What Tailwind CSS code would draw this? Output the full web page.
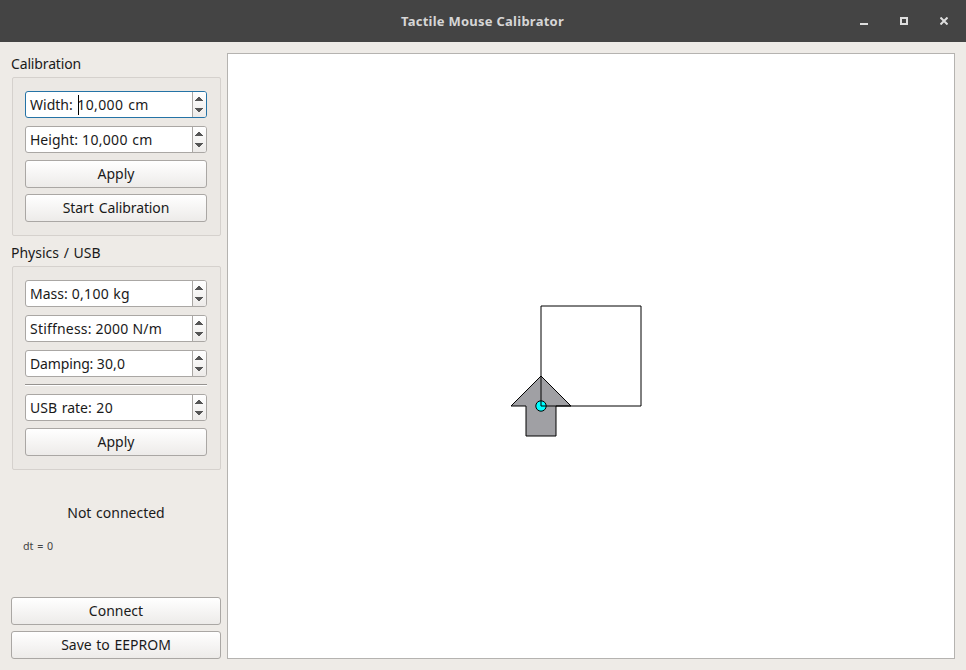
<!DOCTYPE html>
<html lang="en">
<head>
<meta charset="utf-8">
<title>Tactile Mouse Calibrator</title>
<script src="https://cdn.jsdelivr.net/npm/@tailwindcss/browser@4"></script>
</head>
<body class="w-[966px] h-[670px] overflow-hidden flex flex-col bg-[#eeebe7] font-['Noto_Sans',sans-serif] text-[14px] leading-5 text-[#1a1a1a]">
<svg class="hidden">
  <symbol id="arrows" viewBox="0 0 14 25"><path fill="#555" d="M6 5h2v1h1v1h1v1h1v1H3V8h1V7h1V6h1zM3 16h8v1h-1v1H9v1H8v1H6v-1H5v-1H4v-1H3z"/></symbol>
</svg>
<header class="relative h-[42px] shrink-0 bg-[#444] flex items-center justify-center">
  <h1 class="font-bold text-[13px] tracking-[.25px] -ml-px text-[#d6d6d6] whitespace-nowrap">Tactile Mouse Calibrator</h1>
  <div class="absolute right-[18px] top-[17px] flex gap-8">
    <svg class="w-2 h-2" viewBox="0 0 8 8"><path fill="#dedede" d="M0 6h8v2H0z"/></svg>
    <svg class="w-2 h-2" viewBox="0 0 8 8"><path fill="none" stroke="#dedede" stroke-width="2" d="M1 1h6v6H1z"/></svg>
    <svg class="w-2 h-2" viewBox="0 0 8 8"><path stroke="#dedede" stroke-width="2" d="M.5.5l7 7M7.5.5l-7 7"/></svg>
  </div>
</header>
<main class="flex flex-1 pl-[11px] pt-[11px] pr-[11px] pb-[11px] gap-[6px]">
  <aside class="w-[210px] flex flex-col whitespace-nowrap">
    <h2 class="h-6 leading-[21px] tracking-[-.15px]">Calibration</h2>
    <section class="ml-px h-[159px] border border-[#d5d1cd] rounded-[2px] bg-[#ebe8e4] pl-3 pr-[13px] pt-[13px] flex flex-col">
      <div class="h-[27px] mb-2 border border-[#2573a6] rounded-[3px] bg-white flex overflow-hidden">
        <div class="flex-1 pl-1 leading-[25px] relative [word-spacing:1px]">Width: <span class="tracking-[.35px]">10,000 cm</span><i class="absolute left-[52px] top-[3px] w-px h-5 bg-black"></i></div>
        <div class="w-[14px] border-l border-[#aaa7a4] bg-linear-to-b from-white to-[#edebe9]"><svg class="w-[14px] max-w-none h-[25px] -ml-px"><use href="#arrows"/></svg></div>
      </div>
      <div class="h-[27px] mb-[7px] border border-[#aaa7a4] rounded-[3px] bg-white flex overflow-hidden">
        <div class="flex-1 pl-1 leading-[25px] [word-spacing:.5px]">Height: <span class="tracking-[.3px]">10,000 cm</span></div>
        <div class="w-[14px] border-l border-[#aaa7a4] bg-linear-to-b from-white to-[#edebe9]"><svg class="w-[14px] max-w-none h-[25px] -ml-px"><use href="#arrows"/></svg></div>
      </div>
      <button class="h-7 mb-[6px] border border-[#aaa7a4] rounded-[3px] bg-linear-to-b from-white to-[#edebe9]">Apply</button>
      <button class="h-7 border border-[#aaa7a4] rounded-[3px] bg-linear-to-b from-white to-[#edebe9] tracking-[-.1px] [word-spacing:1.5px]">Start Calibration</button>
    </section>
    <h2 class="h-[30px] pt-[6px] leading-[21px] [word-spacing:1px]">Physics / USB</h2>
    <section class="ml-px h-[204px] border border-[#d5d1cd] rounded-[2px] bg-[#ebe8e4] pl-3 pr-[13px] pt-[13px] flex flex-col">
      <div class="h-[27px] mb-2 border border-[#aaa7a4] rounded-[3px] bg-white flex overflow-hidden">
        <div class="flex-1 pl-1 leading-[25px] [word-spacing:.5px]">Mass: <span class="tracking-[.25px]">0,100 kg</span></div>
        <div class="w-[14px] border-l border-[#aaa7a4] bg-linear-to-b from-white to-[#edebe9]"><svg class="w-[14px] max-w-none h-[25px] -ml-px"><use href="#arrows"/></svg></div>
      </div>
      <div class="h-[27px] mb-2 border border-[#aaa7a4] rounded-[3px] bg-white flex overflow-hidden">
        <div class="flex-1 pl-1 leading-[25px]"><span class="tracking-[.2px]">Stiffness: </span><span class="tracking-[.25px]">2000 N/m</span></div>
        <div class="w-[14px] border-l border-[#aaa7a4] bg-linear-to-b from-white to-[#edebe9]"><svg class="w-[14px] max-w-none h-[25px] -ml-px"><use href="#arrows"/></svg></div>
      </div>
      <div class="h-[27px] mb-[7px] border border-[#aaa7a4] rounded-[3px] bg-white flex overflow-hidden">
        <div class="flex-1 pl-1 leading-[25px]"><span class="tracking-[-.15px]">Damping: </span><span class="tracking-[.2px]">30,0</span></div>
        <div class="w-[14px] border-l border-[#aaa7a4] bg-linear-to-b from-white to-[#edebe9]"><svg class="w-[14px] max-w-none h-[25px] -ml-px"><use href="#arrows"/></svg></div>
      </div>
      <div class="h-[2px] mb-2 border-t border-[#969390] bg-white"></div>
      <div class="h-[27px] mb-[7px] border border-[#aaa7a4] rounded-[3px] bg-white flex overflow-hidden">
        <div class="flex-1 pl-1 leading-[25px] [word-spacing:1px]">USB rate: <span class="tracking-[.5px]">20</span></div>
        <div class="w-[14px] border-l border-[#aaa7a4] bg-linear-to-b from-white to-[#edebe9]"><svg class="w-[14px] max-w-none h-[25px] -ml-px"><use href="#arrows"/></svg></div>
      </div>
      <button class="h-7 border border-[#aaa7a4] rounded-[3px] bg-linear-to-b from-white to-[#edebe9]">Apply</button>
    </section>
    <p class="mt-[33px] text-center [word-spacing:1px]">Not connected</p>
    <p class="mt-[13px] pl-3 text-[10.7px] text-[#444] [word-spacing:1px]">dt = 0</p>
    <div class="mt-auto flex flex-col gap-[6px]">
      <button class="h-7 border border-[#aaa7a4] rounded-[3px] bg-linear-to-b from-white to-[#edebe9]">Connect</button>
      <button class="h-7 border border-[#aaa7a4] rounded-[3px] bg-linear-to-b from-white to-[#edebe9] [word-spacing:1px]">Save to EEPROM</button>
    </div>
  </aside>
  <div class="w-[728px] h-[606px] border border-[#b5b3b0] bg-white">
    <svg class="block w-[726px] h-[604px]" viewBox="228 54 726 604" stroke="#000" stroke-width="1">
      <path fill="#a0a0a4" d="M541 376L571 406H556V436H526V406H511Z"/>
      <circle cx="541" cy="406" r="5.2" fill="#0ff"/>
      <path fill="none" d="M541 306H641V406H541Z"/>
    </svg>
  </div>
</main>
</body>
</html>
